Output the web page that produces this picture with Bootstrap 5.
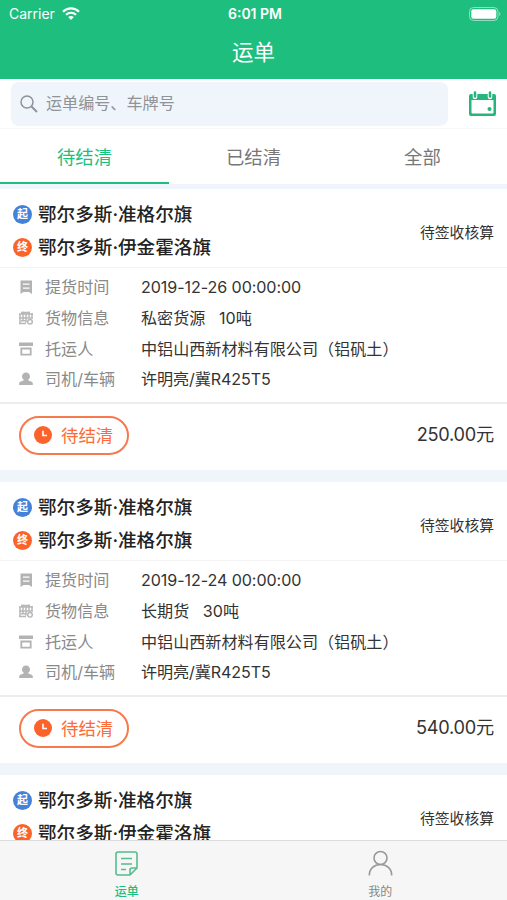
<!DOCTYPE html>
<html lang="zh-CN">
<head>
<meta charset="utf-8">
<meta name="viewport" content="width=device-width, initial-scale=1">
<title>运单</title>
<link href="https://cdn.jsdelivr.net/npm/bootstrap@5.3.0/dist/css/bootstrap.min.css" rel="stylesheet">
<style>
body{font-family:Inter,"Noto Sans CJK SC",sans-serif;color:#333;background:#eff5fb;height:900px;line-height:1}
svg{display:block;flex:none}
.app-head{background:#1ebe7e;height:79px}
.status-row{height:27px;font-size:14px;padding:0 6px 0 9px}
.status-row>*{flex:1 1 0}
.carrier{gap:7px}
.app-title{font-size:21.5px;height:51px}
.search-row{height:50px;padding:3px 11px 3px;border-bottom:1px solid #f7f8f9}
.search-box{width:437px;height:44px;border-radius:8px;background:#f0f5fc;color:#8e9299;font-size:16.1px;padding-left:9px;gap:8px}
.tab-row{height:55px;font-size:18.4px;color:#777}
.tab-row a{color:inherit;padding-top:1px}
.tab-row .current{color:#1ebe7e;border-bottom:2px solid #1ebe7e;padding-top:3px}
.orders{padding-top:5px}
.order{height:281px;margin-bottom:12px}
.route{height:79px;padding:0 13px;border-bottom:1px solid #f4f4f4}
.places{padding-top:6px}
.place{height:33px;font-size:18.6px;font-weight:500;color:#222;gap:6px}
.dot{width:19px;height:19px;border-radius:50%;color:#fff;font-size:11px;font-weight:700}
.dot-a{background:#4382d8}.dot-b{background:#fb632b}
.state{font-size:14.8px;padding-top:10px}
.info{height:136px;padding:4px 0 0 18px;border-bottom:2px solid #ececec;font-size:16.1px}
.line{height:30.7px}
.line .key{width:96px;margin-left:11px;color:#8a8a8a}
.when{letter-spacing:-.08px}
.foot{height:66px;padding:0 13px 4px 19px}
.pill{width:110px;height:39px;border:2px solid #f67a4c;border-radius:20px;color:#fb6c38;font-size:17.4px;padding-left:13px;gap:9px}
.pill span{padding-top:2px}
.sum{font-size:18.2px;letter-spacing:-.25px;padding-bottom:1px}
.dock{height:60px;background:#f6f6f6;border-top:1px solid #dcdcdc;font-size:12px;color:#888}
.dock a{color:inherit;padding-top:9px;gap:9px}
.dock .current{color:#1ebe7e;font-weight:500}
</style>
<script src="https://cdn.jsdelivr.net/npm/bootstrap@5.3.0/dist/js/bootstrap.bundle.min.js"></script>
</head>
<body class="overflow-hidden">
<svg class="d-none">
  <symbol id="i-time" viewBox="0 0 16 16"><path fill="#b3b3b3" d="M2.500 1.500h11.500V15L11 13H5.500l-3 2z"/><path stroke="#fff" stroke-width="1.300" d="M5 5.200h6.500M5 9.200h6.500"/></symbol>
  <symbol id="i-goods" viewBox="0 0 16 16"><path fill="none" stroke="#b8b8b8" stroke-width="1.500" d="M1 4h14M1 8h14M1 13.500h7M2 4v9.500M5 1.500v10M8 2.500v10M11 1.500v7M14 3v5M3 2.500h9M3 10.800h5"/><circle cx="12" cy="11.800" r="2.300" fill="none" stroke="#b8b8b8" stroke-width="1.500"/></symbol>
  <symbol id="i-shop" viewBox="0 0 16 16"><path fill="#b3b3b3" d="M1 1.500h14V5H1z"/><path fill="none" stroke="#b3b3b3" stroke-width="1.800" d="M3.300 7.500h9.400v6.200H3.300z"/></symbol>
  <symbol id="i-user" viewBox="0 0 16 16"><path fill="#b3b3b3" d="M8 1.500c2.500 0 4 1.700 4 4 0 1.500-.8 2.500-2 3.500.2 1 4.500 1 4.800 3.300V14H1.200v-1.700C1.500 10 5.800 10 6 9 4.800 8 4 7 4 5.500c0-2.300 1.500-4 4-4z"/></symbol>
  <symbol id="i-clock" viewBox="0 0 18 18"><circle cx="9" cy="9" r="9" fill="#fb632b"/><path d="M9 4.700v4.800h4" fill="none" stroke="#fff" stroke-width="1.600"/></symbol>
</svg>
<div class="d-flex flex-column h-100">
  <header class="app-head text-white flex-shrink-0">
    <div class="status-row d-flex align-items-center">
      <div class="carrier d-flex align-items-center">Carrier
        <svg width="18" height="13" viewBox="0 0 18 13" fill="none" stroke="#fff" stroke-width="2.200"><path d="M1 4.700c4.500-4.300 11.500-4.300 16 0M4 7.800c2.900-2.600 7.100-2.600 10 0"/><path d="M6.200 10.100q2.800-2.200 5.600 0L9 13z" fill="#fff" stroke="none"/></svg>
      </div>
      <div class="text-center fw-semibold">6:01 PM</div>
      <div class="d-flex justify-content-end"><svg width="32" height="14" viewBox="0 0 32 14"><rect x=".5" y=".5" width="28.500" height="13" rx="4" fill="none" stroke="#fff" stroke-opacity=".5"/><rect x="2.300" y="2.300" width="25" height="9.400" rx="2" fill="#fff"/><path d="M30.300 4.800q2 2.200 0 4.400z" fill="#fff" opacity=".6"/></svg></div>
    </div>
    <div class="app-title d-flex align-items-center justify-content-center">运单</div>
  </header>
  <div class="search-row d-flex align-items-center justify-content-between bg-white flex-shrink-0">
    <div class="search-box d-flex align-items-center">
      <svg width="18" height="18" viewBox="0 0 18 18" fill="none" stroke="#8e9299"><circle cx="7" cy="7" r="6" stroke-width="1.500"/><path d="M11.500 11.500l5.500 5.500" stroke-width="2"/></svg>
      <span>运单编号、车牌号</span>
    </div>
    <svg width="27" height="25" viewBox="0 0 27 25"><path fill="#24b67c" fill-rule="evenodd" d="M2 3h23a2 2 0 0 1 2 2v18a2 2 0 0 1-2 2H2a2 2 0 0 1-2-2V5a2 2 0 0 1 2-2zm.5 6v12.500q0 1 1 1h20q1 0 1-1V9z"/><path d="M6 2v4M21 2v4" stroke="#fff" stroke-width="4.600" stroke-linecap="round"/><path d="M6 1.500v4M21 1.500v4" stroke="#24b67c" stroke-width="2.600" stroke-linecap="round"/><circle cx="20.500" cy="18" r="2" fill="#24b67c"/></svg>
  </div>
  <nav class="tab-row d-flex bg-white flex-shrink-0">
    <a class="current col-4 d-flex align-items-center justify-content-center text-decoration-none">待结清</a>
    <a class="col-4 d-flex align-items-center justify-content-center text-decoration-none">已结清</a>
    <a class="col-4 d-flex align-items-center justify-content-center text-decoration-none">全部</a>
  </nav>
  <main class="orders flex-fill overflow-hidden">
    <article class="order bg-white">
      <div class="route d-flex justify-content-between align-items-center">
        <div class="places">
          <div class="place d-flex align-items-center"><span class="dot dot-a d-flex align-items-center justify-content-center">起</span>鄂尔多斯·准格尔旗</div>
          <div class="place d-flex align-items-center"><span class="dot dot-b d-flex align-items-center justify-content-center">终</span>鄂尔多斯·伊金霍洛旗</div>
        </div>
        <span class="state">待签收核算</span>
      </div>
      <div class="info">
        <div class="line d-flex align-items-center"><svg width="16" height="16"><use href="#i-time"/></svg><span class="key">提货时间</span><span class="when">2019-12-26 00:00:00</span></div>
        <div class="line d-flex align-items-center"><svg width="16" height="16"><use href="#i-goods"/></svg><span class="key">货物信息</span><span>私密货源 &nbsp; 10吨</span></div>
        <div class="line d-flex align-items-center"><svg width="16" height="16"><use href="#i-shop"/></svg><span class="key">托运人</span><span>中铝山西新材料有限公司（铝矾土）</span></div>
        <div class="line d-flex align-items-center"><svg width="16" height="16"><use href="#i-user"/></svg><span class="key">司机/车辆</span><span class="when">许明亮/冀R425T5</span></div>
      </div>
      <div class="foot d-flex align-items-center justify-content-between">
        <span class="pill d-flex align-items-center"><svg width="18" height="18"><use href="#i-clock"/></svg><span>待结清</span></span>
        <span class="sum">250.00元</span>
      </div>
    </article>
    <article class="order bg-white">
      <div class="route d-flex justify-content-between align-items-center">
        <div class="places">
          <div class="place d-flex align-items-center"><span class="dot dot-a d-flex align-items-center justify-content-center">起</span>鄂尔多斯·准格尔旗</div>
          <div class="place d-flex align-items-center"><span class="dot dot-b d-flex align-items-center justify-content-center">终</span>鄂尔多斯·准格尔旗</div>
        </div>
        <span class="state">待签收核算</span>
      </div>
      <div class="info">
        <div class="line d-flex align-items-center"><svg width="16" height="16"><use href="#i-time"/></svg><span class="key">提货时间</span><span class="when">2019-12-24 00:00:00</span></div>
        <div class="line d-flex align-items-center"><svg width="16" height="16"><use href="#i-goods"/></svg><span class="key">货物信息</span><span>长期货 &nbsp; 30吨</span></div>
        <div class="line d-flex align-items-center"><svg width="16" height="16"><use href="#i-shop"/></svg><span class="key">托运人</span><span>中铝山西新材料有限公司（铝矾土）</span></div>
        <div class="line d-flex align-items-center"><svg width="16" height="16"><use href="#i-user"/></svg><span class="key">司机/车辆</span><span class="when">许明亮/冀R425T5</span></div>
      </div>
      <div class="foot d-flex align-items-center justify-content-between">
        <span class="pill d-flex align-items-center"><svg width="18" height="18"><use href="#i-clock"/></svg><span>待结清</span></span>
        <span class="sum">540.00元</span>
      </div>
    </article>
    <article class="order bg-white">
      <div class="route d-flex justify-content-between align-items-center">
        <div class="places">
          <div class="place d-flex align-items-center"><span class="dot dot-a d-flex align-items-center justify-content-center">起</span>鄂尔多斯·准格尔旗</div>
          <div class="place d-flex align-items-center"><span class="dot dot-b d-flex align-items-center justify-content-center">终</span>鄂尔多斯·伊金霍洛旗</div>
        </div>
        <span class="state">待签收核算</span>
      </div>
    </article>
  </main>
  <nav class="dock d-flex flex-shrink-0">
    <a class="current col-6 d-flex flex-column align-items-center text-decoration-none">
      <svg width="25" height="27" viewBox="0 0 25 27" fill="none" stroke="#56bd8c" stroke-width="1.600" stroke-linejoin="round"><path d="M4 2h17a2 2 0 0 1 2 2v14l-7 7H4a2 2 0 0 1-2-2V4a2 2 0 0 1 2-2zM16 25v-5a2 2 0 0 1 2-2h5M7 8.500h11M7 14h11M7 19.500h5"/></svg>
      运单
    </a>
    <a class="col-6 d-flex flex-column align-items-center text-decoration-none">
      <svg width="25" height="27" viewBox="0 0 25 27" fill="none" stroke="#999" stroke-width="1.600"><circle cx="12.500" cy="8" r="6.500"/><path d="M1.300 25.500c0-7 5-11 11.200-11s11.200 4 11.200 11"/></svg>
      我的
    </a>
  </nav>
</div>
</body>
</html>
